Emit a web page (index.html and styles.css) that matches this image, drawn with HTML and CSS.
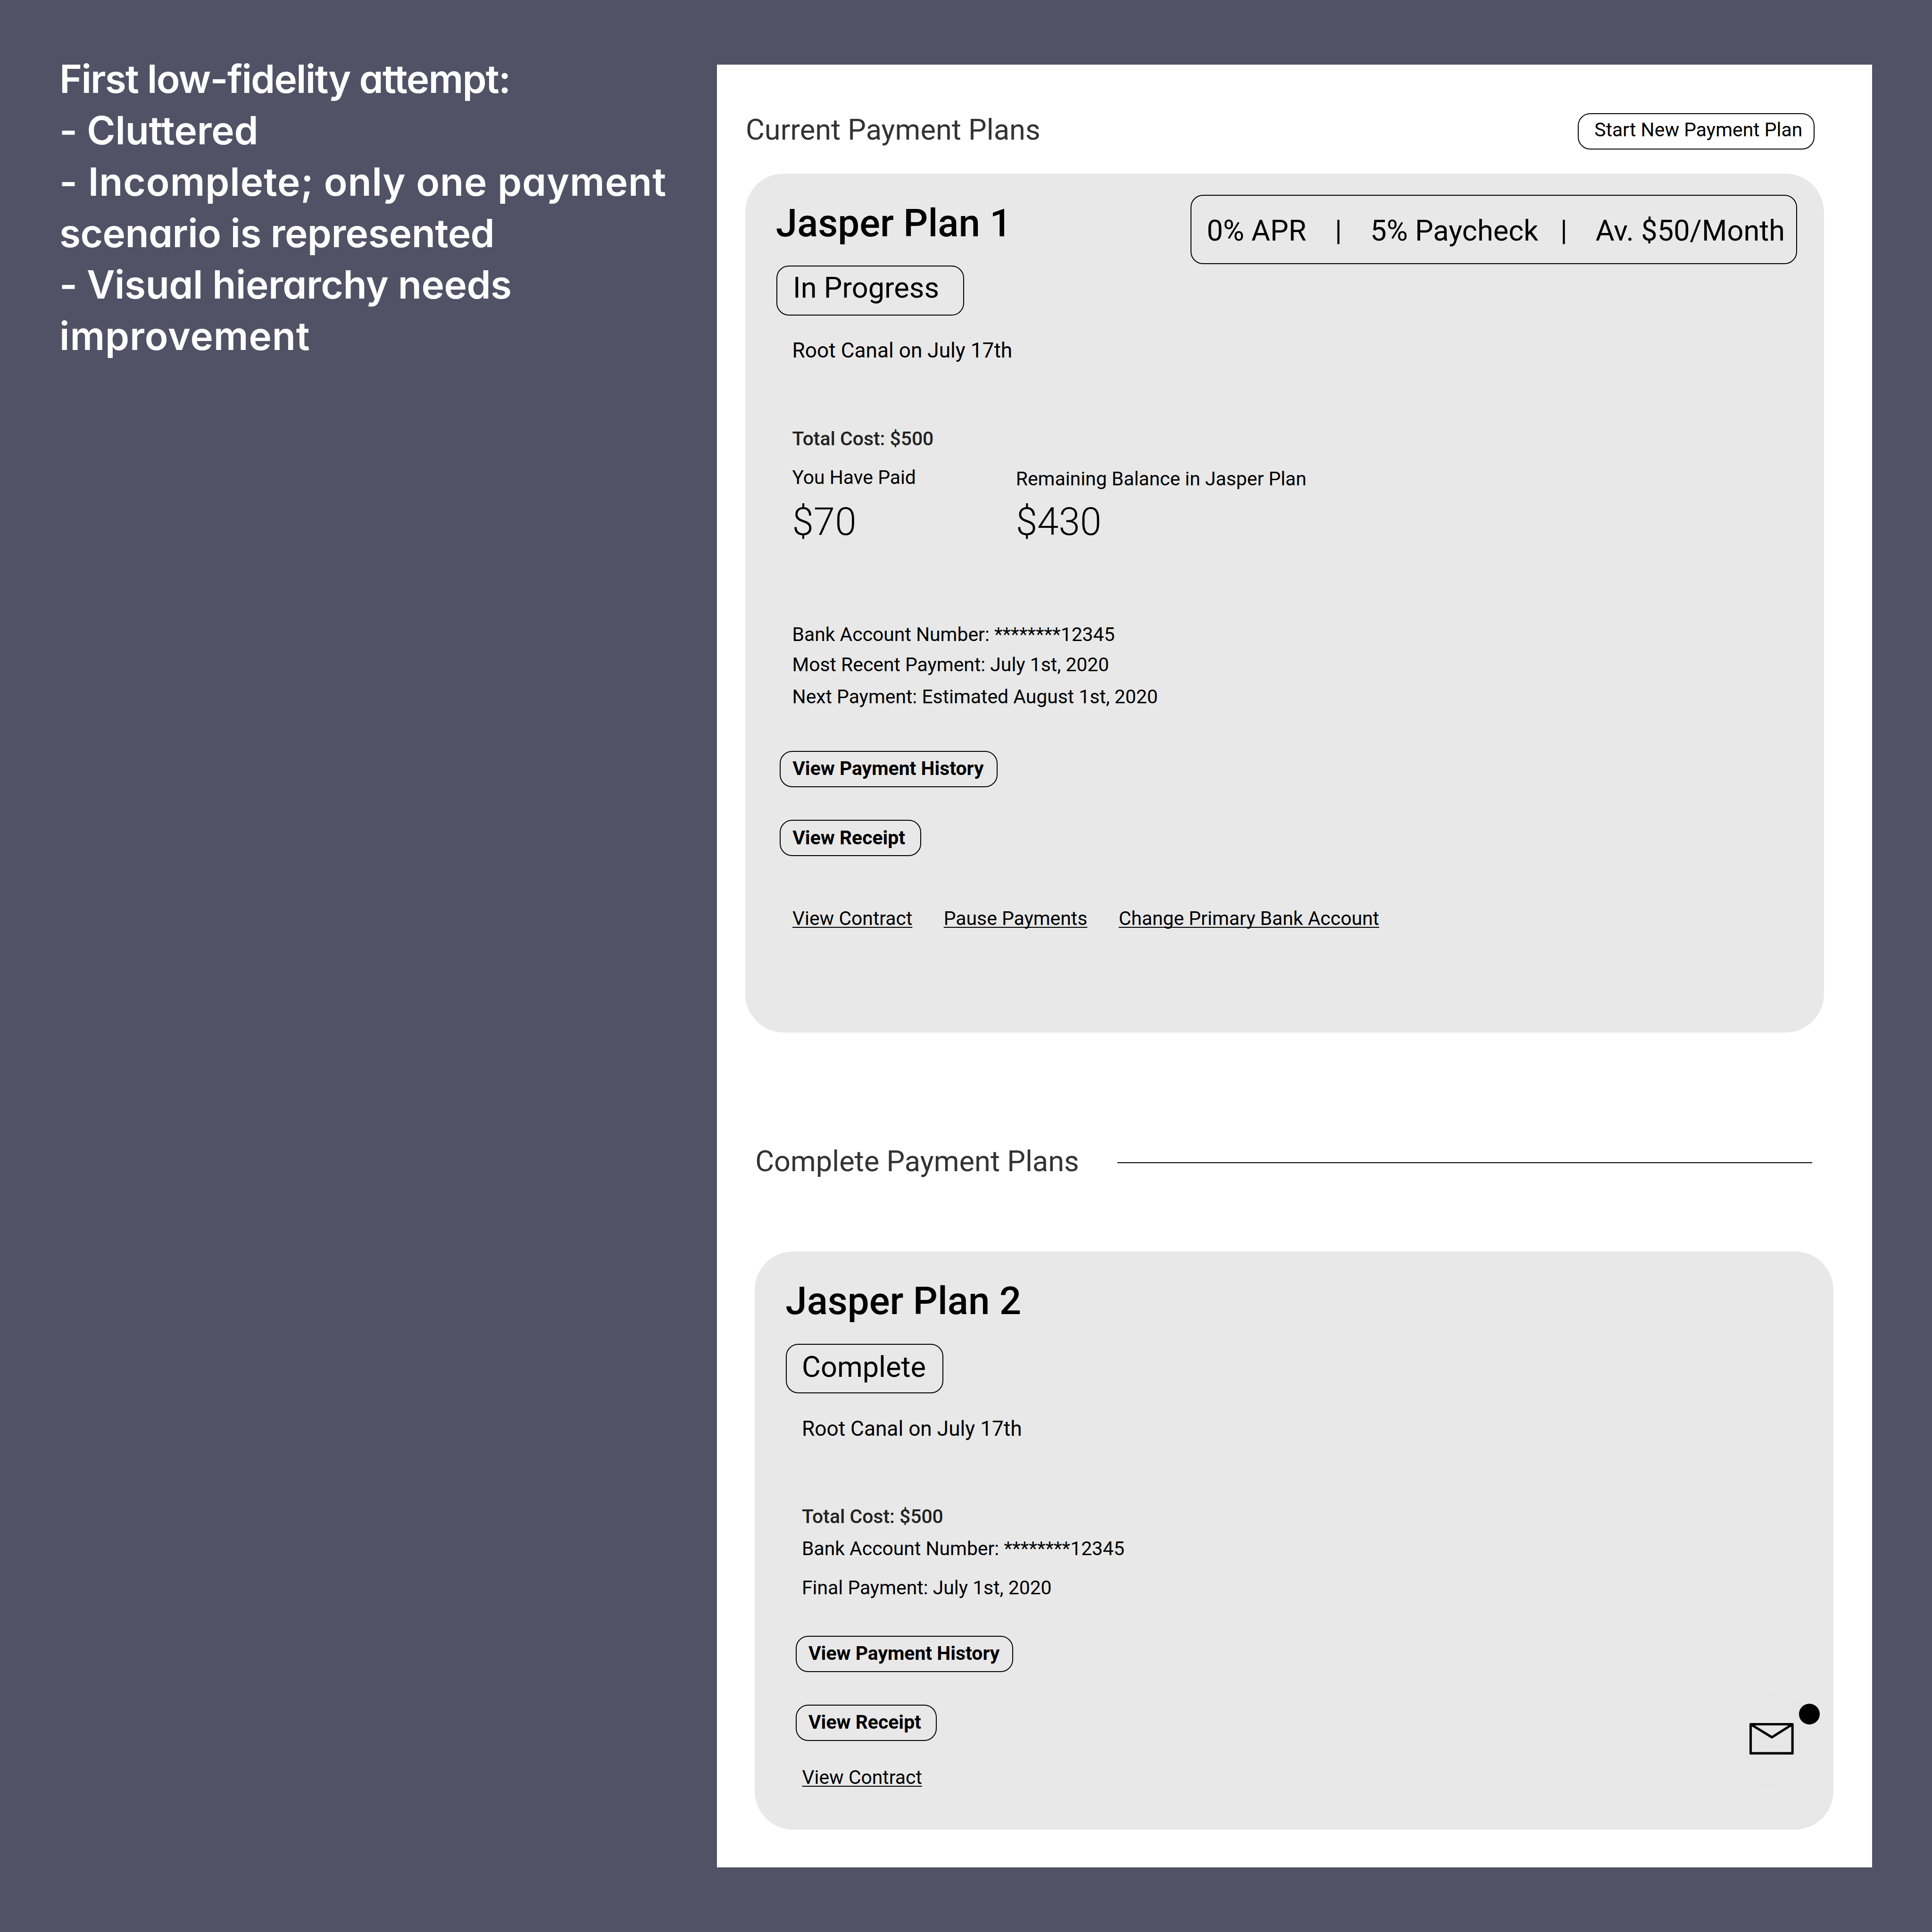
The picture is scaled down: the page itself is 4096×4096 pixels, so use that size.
FILE: index.html
```html
<!DOCTYPE html>
<html lang="en">
<head>
<meta charset="utf-8">
<title>Payment Plans – Low-fidelity</title>
<link rel="stylesheet" href="styles.css">
</head>
<body>
<div class="board">
  <aside class="notes">
    <span class="note n1">First low-fidelity attempt:</span>
    <span class="note n2">- Cluttered</span>
    <span class="note n3">- Incomplete; only one payment</span>
    <span class="note n4">scenario is represented</span>
    <span class="note n5">- Visual hierarchy needs</span>
    <span class="note n6">improvement</span>
  </aside>

  <main class="panel">
    <header class="panel-head">
      <h1 class="heading">Current Payment Plans</h1>
      <button class="btn btn-new">Start New Payment Plan</button>
    </header>

    <section class="card card-current">
      <div class="card-head">
        <h2 class="title">Jasper Plan 1</h2>
        <div class="terms"><span>0% APR</span><span>|</span><span>5% Paycheck</span><span>|</span><span>Av. $50/Month</span></div>
      </div>
      <div class="status status-progress">In Progress</div>
      <div class="body">
        <p class="reason">Root Canal on July 17th</p>
        <p class="text total">Total Cost: $500</p>
        <div class="amounts">
          <div class="paid">
            <p class="text">You Have Paid</p>
            <p class="money">$70</p>
          </div>
          <div class="remaining">
            <p class="text">Remaining Balance in Jasper Plan</p>
            <p class="money">$430</p>
          </div>
        </div>
        <p class="text account">Bank Account Number: ********12345</p>
        <p class="text recent">Most Recent Payment: July 1st, 2020</p>
        <p class="text next">Next Payment: Estimated August 1st, 2020</p>
      </div>
      <div class="actions">
        <button class="btn btn-history">View Payment History</button>
        <button class="btn btn-receipt">View Receipt</button>
      </div>
      <nav class="links">
        <a class="text link">View Contract</a>
        <a class="text link">Pause Payments</a>
        <a class="text link">Change Primary Bank Account</a>
      </nav>
    </section>

    <header class="section-head">
      <h1 class="heading">Complete Payment Plans</h1>
      <div class="rule"></div>
    </header>

    <section class="card card-complete">
      <h2 class="title">Jasper Plan 2</h2>
      <div class="status status-complete">Complete</div>
      <div class="body">
        <p class="reason">Root Canal on July 17th</p>
        <p class="text total">Total Cost: $500</p>
        <p class="text account">Bank Account Number: ********12345</p>
        <p class="text final">Final Payment: July 1st, 2020</p>
      </div>
      <div class="actions">
        <button class="btn btn-history">View Payment History</button>
        <button class="btn btn-receipt">View Receipt</button>
      </div>
      <nav class="links">
        <a class="text link">View Contract</a>
      </nav>
      <div class="inbox">
        <svg class="envelope" viewBox="0 0 103 73.5" fill="none" stroke="#000" stroke-width="5.6" stroke-linejoin="round">
          <path d="M2.8 2.8H100.2V70.5H2.8Z"/>
          <path d="M2.8 2.8L52.4 33.2L100.2 2.8"/>
        </svg>
        <span class="dot"></span>
      </div>
    </section>
  </main>
</div>
</body>
</html>
```
FILE: styles.css
```css
/* 1rem is 10 units of the 4500-unit artboard */
html { font-size: 9.10222px; }

* { box-sizing: border-box; margin: 0; padding: 0; }

body {
  background: #525266;
  font-family: Roboto, "Liberation Sans", sans-serif;
  color: #000;
}

.board {
  display: flex;
  align-items: flex-start;
  width: 4096px;
  height: 4096px;
  padding-top: 15rem;
  overflow: hidden;
}

/* Notes column */
.notes {
  display: flex;
  flex-direction: column;
  width: 167.04rem;
  padding-left: 13.85rem;
  margin-top: -2.5rem;
  font-family: Inter, sans-serif;
  font-size: 9rem;
  font-weight: 600;
  line-height: 11.97rem;
  color: #fff;
  font-feature-settings: "cv11";
  white-space: nowrap;
}
.n1 { letter-spacing: -0.195rem; }
.n2 { letter-spacing: -0.026rem; }
.n3 { letter-spacing: 0.1rem; }
.n4 { letter-spacing: -0.063rem; }
.n5 { letter-spacing: -0.048rem; }
.n6 { letter-spacing: 0.1rem; }

/* Wireframe panel */
.panel {
  width: 269rem;
  height: 420rem;
  padding-top: 11.21rem;
  background: #fff;
}

.panel-head {
  display: flex;
  justify-content: space-between;
  align-items: flex-start;
  height: 8.59rem;
  padding: 0 13.38rem 0 6.65rem;
}

.heading {
  font-size: 6.738rem;
  font-weight: 400;
  line-height: 8rem;
  color: #333;
  white-space: nowrap;
}

.btn {
  display: block;
  height: 8.46rem;
  padding: 0 0 0.15rem 2.75rem;
  border: 2px solid #000;
  border-radius: 2.9rem;
  background: none;
  font-family: inherit;
  font-size: 4.492rem;
  font-weight: 700;
  line-height: 6rem;
  text-align: left;
  white-space: nowrap;
  color: #000;
}
.btn-new {
  width: 55.18rem;
  margin-top: 0.16rem;
  padding: 0 0 0.6rem 3.68rem;
  font-weight: 400;
}
.btn-history { width: 50.7rem; }
.btn-receipt { width: 32.9rem; }

/* Plan cards */
.card {
  position: relative;
  width: 251.28rem;
  border-radius: 9rem;
  background: #e8e8e8;
}
.card-current {
  height: 200.1rem;
  margin: 5.6rem 0 0 6.51rem;
  padding-top: 5rem;
}
.card-complete {
  height: 134.7rem;
  margin: 16.98rem 0 0 8.76rem;
  padding-top: 6.08rem;
}

.card-head {
  display: flex;
  justify-content: space-between;
  align-items: flex-start;
  padding-right: 6.3rem;
}

.title {
  padding-left: 7.15rem;
  font-size: 8.984rem;
  font-weight: 500;
  line-height: 11rem;
  white-space: nowrap;
}
.card-head .title { padding-top: 1.03rem; }

.terms {
  display: grid;
  grid-template-columns: 29.84rem 8.27rem 44.23rem 8.23rem 1fr;
  width: 141.27rem;
  height: 16.16rem;
  padding: 4.2rem 0 0 3.6rem;
  border: 2px solid #000;
  border-radius: 2.9rem;
  font-size: 6.738rem;
  line-height: 8rem;
  white-space: nowrap;
}

.status {
  height: 11.58rem;
  margin-left: 7.27rem;
  border: 2px solid #000;
  border-radius: 2.9rem;
  font-size: 6.738rem;
  line-height: 8rem;
}
.status-progress {
  width: 43.75rem;
  margin-top: 0.32rem;
  padding: 0.94rem 0 0 3.65rem;
}
.status-complete {
  width: 36.62rem;
  margin-top: 4.4rem;
  padding: 1.3rem 0 0 3.48rem;
}

.body { padding-left: 10.97rem; white-space: nowrap; }

.reason {
  margin-top: 5.24rem;
  font-size: 4.86rem;
  line-height: 6rem;
}

.text {
  font-size: 4.49rem;
  line-height: 6rem;
}
.total {
  margin-top: 14.5rem;
  font-weight: 500;
  color: #222;
}

.amounts { display: flex; }
.paid { width: 52.1rem; padding-top: 3rem; }
.remaining { padding-top: 3.33rem; }
.money {
  margin-top: 1.87rem;
  font-size: 8.984rem;
  font-weight: 300;
  line-height: 11rem;
}
.remaining .money { margin-top: 1.54rem; }

.card-current .account { margin-top: 17.72rem; }
.recent { margin-top: 1.08rem; }
.next { margin-top: 1.5rem; }
.card-complete .account { margin-top: 1.45rem; }
.final { margin-top: 3.07rem; }

.actions {
  display: flex;
  flex-direction: column;
  gap: 7.61rem;
}
.card-current .actions { padding: 9.53rem 0 0 8.07rem; }
.card-complete .actions { padding: 8.18rem 0 0 9.53rem; }

.links {
  display: flex;
  gap: 7.3rem;
  padding-left: 11.02rem;
  white-space: nowrap;
}
.card-current .links { margin-top: 11.5rem; }
.card-complete .links { margin-top: 5.53rem; }
.link {
  text-decoration: underline;
  text-decoration-thickness: 2px;
  text-decoration-skip-ink: none;
  text-underline-offset: 0.48rem;
}

/* Complete plans heading with trailing rule */
.section-head {
  display: flex;
  align-items: flex-start;
  height: 8rem;
  margin-top: 26rem;
  padding-left: 8.87rem;
}
.section-head .heading { width: 84.35rem; }
.rule {
  width: 161.85rem;
  height: 2px;
  margin-top: 4.22rem;
  background: #000;
}

/* Inbox button floating over the card corner */
.inbox {
  position: absolute;
  left: 225.47rem;
  top: 102.52rem;
  width: 22.7rem;
  height: 22.7rem;
  border-radius: 50%;
  background: #e7e7e7;
}
.envelope {
  position: absolute;
  left: 6.23rem;
  top: 7.33rem;
  width: 10.3rem;
  height: 7.35rem;
}
.dot {
  position: absolute;
  left: 17.73rem;
  top: 2.8rem;
  width: 4.9rem;
  height: 4.9rem;
  border-radius: 50%;
  background: #000;
}
```
